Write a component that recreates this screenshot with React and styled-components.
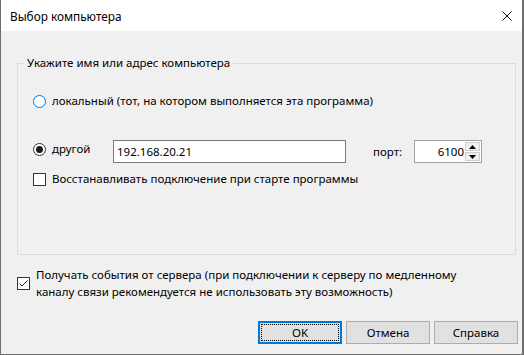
import React from "react";
import styled, { createGlobalStyle } from "styled-components";

const Global = createGlobalStyle`
  html, body { margin: 0; padding: 0; background: #2b2b2b; }
  body { font-family: "Noto Sans", "Open Sans", sans-serif; font-size: 11.5px; color: #000; }
  * { box-sizing: border-box; }
`;

const Win = styled.div`
  width: 524px;
  height: 355px;
  display: flex;
  flex-direction: column;
  background: #f0f0f0;
  border: 1px solid #6e6e6e;
  border-top: none;
  border-right-width: 2px;
`;

const TitleBar = styled.div`
  height: 31px;
  flex: none;
  background: #fff;
  display: flex;
  align-items: center;
  justify-content: space-between;
  padding: 0 10px 0 9px;
  font-size: 11.8px;
`;

const CloseBtn = styled.div`
  width: 10px;
  height: 10px;
  display: flex;
`;

const Body = styled.div`
  flex: 1;
  display: flex;
  flex-direction: column;
  padding: 32px 4px 0 16px;
`;

const Group = styled.div`
  position: relative;
  width: 499px;
  height: 192px;
  flex: none;
  border: 1px solid #dcdcdc;
  padding: 29px 0 0 15px;
  display: flex;
  flex-direction: column;
`;

const Legend = styled.span`
  position: absolute;
  left: 6px;
  top: -9px;
  padding: 0 3px;
  background: #f0f0f0;
  line-height: 16px;
`;

const Row = styled.div`
  display: flex;
  align-items: ${(p) => p.$align || "center"};
  margin-top: ${(p) => p.$mt || 0}px;
`;

const Radio = styled.span`
  width: 13px;
  height: 13px;
  flex: none;
  border-radius: 50%;
  border: 1px solid ${(p) => (p.$hover ? "#0078d7" : "#333")};
  background: #fff;
  display: flex;
  align-items: center;
  justify-content: center;
  margin-top: ${(p) => p.$mt || 0}px;
  &::after {
    content: "";
    display: ${(p) => (p.$checked ? "block" : "none")};
    width: 7px;
    height: 7px;
    border-radius: 50%;
    background: #1a1a1a;
  }
`;

const Check = styled.span`
  width: 13px;
  height: 13px;
  flex: none;
  border: 1px solid #333;
  background: #fff;
  display: flex;
  align-items: center;
  justify-content: center;
`;

const Label = styled.span`
  margin-left: ${(p) => p.$ml || 6}px;
  line-height: 16px;
  white-space: nowrap;
`;

const OtherLabel = styled.span`
  margin-left: 6px;
  width: 61px;
  line-height: 16px;
  margin-top: 1px;
`;

const TextInput = styled.div`
  width: 233px;
  height: 23px;
  border: 1px solid #7a7a7a;
  background: #fff;
  padding: 0 3px;
  display: flex;
  align-items: center;
`;

const PortLabel = styled.span`
  margin-left: 27px;
  width: 41px;
  line-height: 23px;
`;

const Spin = styled.div`
  width: 68px;
  height: 23px;
  border: 1px solid #a0a0a0;
  background: #fff;
  display: flex;
  align-items: stretch;
`;

const SpinValue = styled.span`
  flex: 1;
  text-align: right;
  padding-right: 1px;
  line-height: 21px;
`;

const SpinBtns = styled.div`
  width: 16px;
  display: flex;
  flex-direction: column;
  padding: 1px 1px 1px 0;
  gap: 1px;
`;

const SpinBtn = styled.div`
  flex: 1;
  background: #f0f0f0;
  border: 1px solid #cfcfcf;
  display: flex;
  align-items: center;
  justify-content: center;
`;

const Events = styled.div`
  display: flex;
  align-items: center;
  margin-top: 11px;
`;

const EventsText = styled.span`
  margin-left: 6px;
  line-height: 17px;
`;

const Buttons = styled.div`
  display: flex;
  justify-content: flex-end;
  gap: 4px;
  margin-top: 21px;
`;

const Button = styled.div`
  position: relative;
  width: 84px;
  height: 23px;
  background: #e1e1e1;
  border: ${(p) => (p.$default ? "2px solid #0078d7" : "1px solid #adadad")};
  display: flex;
  align-items: center;
  justify-content: center;
  &::after {
    content: "";
    display: ${(p) => (p.$default ? "block" : "none")};
    position: absolute;
    inset: 1px;
    border: 1px dotted #000;
  }
`;

const Tick = () => (
  <svg width="11" height="11" viewBox="0 0 11 11">
    <path d="M1.5 5.5 L4 8 L9.5 2.5" fill="none" stroke="#222" strokeWidth="1" />
  </svg>
);

const Arrow = ({ up }) => (
  <svg width="7" height="4" viewBox="0 0 7 4">
    {up ? <path d="M0 4 L3.5 0 L7 4 Z" fill="#000" /> : <path d="M0 0 L3.5 4 L7 0 Z" fill="#000" />}
  </svg>
);

export default function App() {
  return (
    <>
      <Global />
      <Win>
        <TitleBar>
          <span>Выбор компьютера</span>
          <CloseBtn>
            <svg width="10" height="10" viewBox="0 0 10 10">
              <path d="M0.5 0.5 L9.5 9.5 M9.5 0.5 L0.5 9.5" stroke="#111" strokeWidth="1" />
            </svg>
          </CloseBtn>
        </TitleBar>
        <Body>
          <Group>
            <Legend>Укажите имя или адрес компьютера</Legend>
            <Row>
              <Radio $hover />
              <Label>локальный (тот, на котором выполняется эта программа)</Label>
            </Row>
            <Row $align="flex-start" $mt={31}>
              <Radio $checked $mt={3} />
              <OtherLabel>другой</OtherLabel>
              <TextInput>192.168.20.21</TextInput>
              <PortLabel>порт:</PortLabel>
              <Spin>
                <SpinValue>6100</SpinValue>
                <SpinBtns>
                  <SpinBtn><Arrow up /></SpinBtn>
                  <SpinBtn><Arrow /></SpinBtn>
                </SpinBtns>
              </Spin>
            </Row>
            <Row $mt={8}>
              <Check />
              <Label>Восстанавливать подключение при старте программы</Label>
            </Row>
          </Group>
          <Events>
            <Check><Tick /></Check>
            <EventsText>
              Получать события от сервера (при подключении к серверу по медленному
              <br />
              каналу связи рекомендуется не использовать эту возможность)
            </EventsText>
          </Events>
          <Buttons>
            <Button $default>OK</Button>
            <Button>Отмена</Button>
            <Button>Справка</Button>
          </Buttons>
        </Body>
      </Win>
    </>
  );
}
